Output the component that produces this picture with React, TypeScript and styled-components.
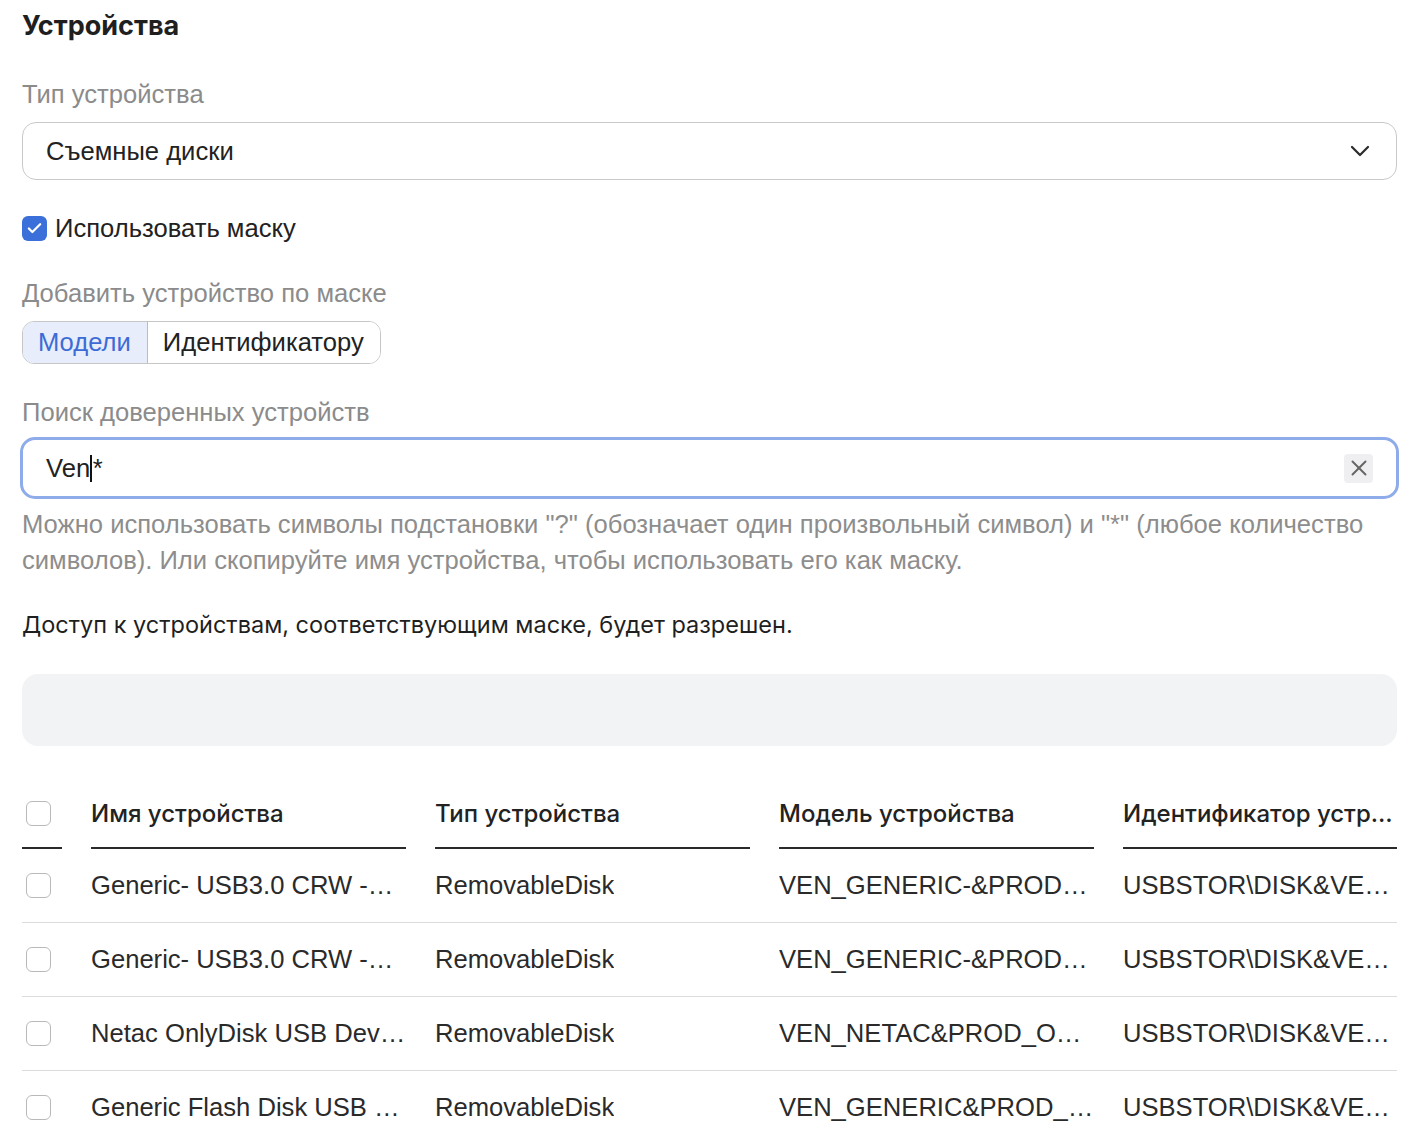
import { ReactElement } from 'react';
import styled, { createGlobalStyle } from 'styled-components';
import { Check, X } from 'lucide-react';

const GlobalStyle = createGlobalStyle`
  html, body {
    margin: 0;
    padding: 0;
    background: #fff;
  }
  body {
    font-family: 'Liberation Sans', Arial, sans-serif;
    color: #222;
  }
`;

const Page = styled.div`
  padding: 10px 12px 0 22px;
  display: flex;
  flex-direction: column;
`;

const Title = styled.h2`
  margin: 0;
  font-family: Inter, 'Liberation Sans', sans-serif;
  font-weight: 700;
  font-size: 27px;
  line-height: 32px;
  color: #1f1f1f;
`;

const FieldLabel = styled.div<{ $top: number }>`
  margin-top: ${({ $top }) => $top}px;
  font-size: 25.6px;
  line-height: 32px;
  color: #8b8b8b;
`;

const Select = styled.div`
  margin-top: 12px;
  height: 58px;
  box-sizing: border-box;
  border: 1px solid #c9c9c9;
  border-radius: 14px;
  padding: 0 26px 0 23px;
  display: flex;
  align-items: center;
  justify-content: space-between;
  font-size: 25.6px;
  color: #222;
`;

const Chevron = styled.svg`
  width: 20px;
  height: 12px;
  color: #2a2a2a;
`;

const CheckRow = styled.label`
  margin-top: 32px;
  display: flex;
  align-items: center;
  gap: 8px;
  font-size: 25.6px;
  line-height: 32px;
  color: #222;
`;

const Box = styled.span<{ $checked?: boolean }>`
  width: 25px;
  height: 25px;
  box-sizing: border-box;
  border-radius: 6px;
  display: inline-flex;
  align-items: center;
  justify-content: center;
  flex-shrink: 0;
  background: ${({ $checked }) => ($checked ? '#3b6fd9' : '#fff')};
  border: ${({ $checked }) => ($checked ? 'none' : '1.5px solid #b9b9b9')};
  color: #fff;
`;

const Segmented = styled.div`
  margin-top: 12px;
  align-self: flex-start;
  display: flex;
  height: 43px;
  box-sizing: border-box;
  border: 1px solid #c6c6c6;
  border-radius: 12px;
  overflow: hidden;
`;

const Segment = styled.div<{ $active?: boolean }>`
  display: flex;
  align-items: center;
  padding: 0 16px 0 15px;
  font-size: 25.6px;
  color: ${({ $active }) => ($active ? '#3d6bd6' : '#222')};
  background: ${({ $active }) => ($active ? '#e7edfa' : '#fff')};
  border-right: ${({ $active }) => ($active ? '1px solid #a9bde9' : 'none')};
`;

const SearchBox = styled.div`
  margin-top: 9px;
  margin-left: -2px;
  margin-right: -2px;
  height: 62px;
  box-sizing: border-box;
  border: 3px solid #8eabea;
  border-radius: 15px;
  padding: 0 23px 0 23px;
  display: flex;
  align-items: center;
  justify-content: space-between;
  font-size: 25.6px;
  color: #222;
`;

const Caret = styled.span`
  display: inline-block;
  width: 1.5px;
  height: 27px;
  background: #111;
  vertical-align: -5px;
  margin: 0 1px 0 0;
`;

const ClearButton = styled.span`
  width: 29px;
  height: 29px;
  border-radius: 4px;
  background: #efeff1;
  display: flex;
  align-items: center;
  justify-content: center;
  color: #666;
`;

const Hint = styled.p`
  margin: 7px 0 0;
  font-size: 25.6px;
  line-height: 36px;
  color: #8d8d8d;
`;

const Notice = styled.p`
  margin: 31px 0 0;
  font-family: Inter, 'Liberation Sans', sans-serif;
  font-size: 23.5px;
  line-height: 32px;
  color: #1f1f1f;
`;

const EmptyPanel = styled.div`
  margin-top: 33px;
  height: 72px;
  border-radius: 16px;
  background: #f2f3f5;
`;

const Table = styled.div`
  margin-top: 34px;
  display: flex;
  flex-direction: column;
`;

const Row = styled.div<{ $head?: boolean }>`
  display: grid;
  grid-template-columns: 40px 315px 315px 315px minmax(0, 1fr);
  column-gap: 29px;
  height: ${({ $head }) => ($head ? 69 : 73)}px;
  border-bottom: ${({ $head }) => ($head ? 'none' : '1px solid #dcdcdc')};
  align-items: stretch;
`;

const HeadCell = styled.div`
  display: flex;
  align-items: center;
  border-bottom: 2px solid #2a2a2a;
  font-family: Inter, 'Liberation Sans', sans-serif;
  font-weight: 500;
  font-size: 24px;
  color: #222;
  white-space: nowrap;
  overflow: hidden;
  min-width: 0;
  span {
    overflow: hidden;
    text-overflow: ellipsis;
  }
`;

const Cell = styled.div`
  display: flex;
  align-items: center;
  min-width: 0;
  overflow: hidden;
  font-size: 25.6px;
  color: #2a2a2a;
  white-space: nowrap;
  span {
    overflow: hidden;
    text-overflow: ellipsis;
  }
`;

const BoxCell = styled.div`
  display: flex;
  align-items: center;
  padding-left: 4px;
`;

const devices = [
  ['Generic- USB3.0 CRW -SD USB Device', 'RemovableDisk', 'VEN_GENERIC-&PROD_USB3.0_CRW_-SD', 'USBSTOR\\DISK&VEN_GENERIC-'],
  ['Generic- USB3.0 CRW -CF USB Device', 'RemovableDisk', 'VEN_GENERIC-&PROD_USB3.0_CRW_-CF', 'USBSTOR\\DISK&VEN_GENERIC-'],
  ['Netac OnlyDisk USB Device', 'RemovableDisk', 'VEN_NETAC&PROD_ONLYDISK', 'USBSTOR\\DISK&VEN_NETAC'],
  ['Generic Flash Disk USB Device', 'RemovableDisk', 'VEN_GENERIC&PROD_FLASH_DISK', 'USBSTOR\\DISK&VEN_GENERIC'],
];

const columns = ['Имя устройства', 'Тип устройства', 'Модель устройства', 'Идентификатор устройства'];

export default function App(): ReactElement {
  return (
    <>
      <GlobalStyle />
      <Page>
        <Title>Устройства</Title>

        <FieldLabel $top={36}>Тип устройства</FieldLabel>
        <Select>
          <span>Съемные диски</span>
          <Chevron viewBox="0 0 20 12" fill="none">
            <path d="M2 2l8 8 8-8" stroke="currentColor" strokeWidth="2.2" strokeLinecap="round" strokeLinejoin="round" />
          </Chevron>
        </Select>

        <CheckRow>
          <Box $checked>
            <Check size={17} strokeWidth={3.2} />
          </Box>
          Использовать маску
        </CheckRow>

        <FieldLabel $top={33}>Добавить устройство по маске</FieldLabel>
        <Segmented>
          <Segment $active>Модели</Segment>
          <Segment>Идентификатору</Segment>
        </Segmented>

        <FieldLabel $top={32}>Поиск доверенных устройств</FieldLabel>
        <SearchBox>
          <span>
            Ven
            <Caret />*
          </span>
          <ClearButton>
            <X size={26} strokeWidth={1.8} />
          </ClearButton>
        </SearchBox>
        <Hint>
          Можно использовать символы подстановки "?" (обозначает один произвольный символ) и "*" (любое количество
          символов). Или скопируйте имя устройства, чтобы использовать его как маску.
        </Hint>

        <Notice>Доступ к устройствам, соответствующим маске, будет разрешен.</Notice>

        <EmptyPanel />

        <Table>
          <Row $head>
            <HeadCell>
              <BoxCell>
                <Box />
              </BoxCell>
            </HeadCell>
            {columns.map((c) => (
              <HeadCell key={c}>
                <span>{c}</span>
              </HeadCell>
            ))}
          </Row>
          {devices.map((d, i) => (
            <Row key={i}>
              <BoxCell>
                <Box />
              </BoxCell>
              {d.map((value, j) => (
                <Cell key={j}>
                  <span>{value}</span>
                </Cell>
              ))}
            </Row>
          ))}
        </Table>
      </Page>
    </>
  );
}
